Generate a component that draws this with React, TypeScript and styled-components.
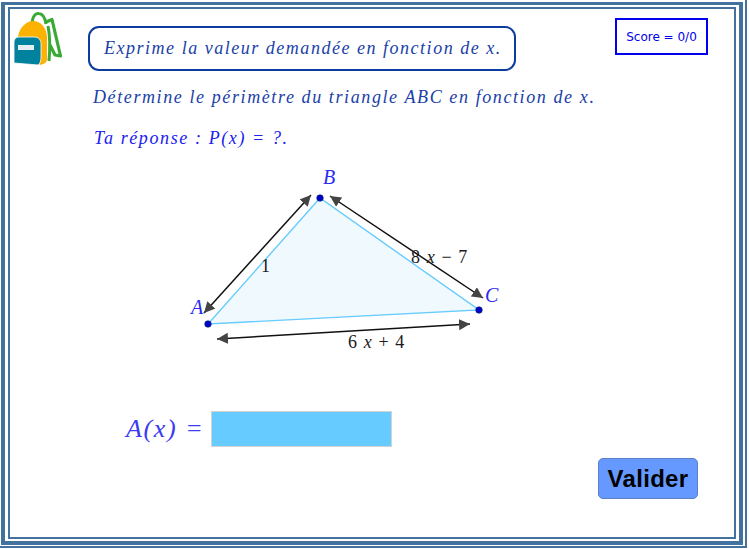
import React from 'react'
import styled, { createGlobalStyle } from 'styled-components'

const GlobalStyle = createGlobalStyle`
	html, body {
		margin: 0;
		padding: 0;
		background: #ffffff;
	}
`

const frameBlue = '#44729f'

const Page = styled.div`
	box-sizing: border-box;
	width: 747px;
	height: 548px;
	border-right: 2px solid ${frameBlue};
	border-bottom: 2px solid ${frameBlue};
	padding: 2px 2px 1px 1px;
	overflow: hidden;
`

const OuterFrame = styled.div`
	box-sizing: border-box;
	height: 100%;
	border: 4px solid ${frameBlue};
	border-top-width: 3px;
	padding: 2px 3px;
`

const InnerFrame = styled.div`
	box-sizing: border-box;
	height: 100%;
	border: 2px solid ${frameBlue};
`

const Board = styled.main`
	height: 100%;
	display: flex;
	flex-direction: column;
`

const Header = styled.header`
	display: flex;
	align-items: flex-start;
	height: 62px;
	padding: 1px 26px 0 2px;
`

const Bag = styled.svg`
	width: 52px;
	height: 56px;
	flex: none;
`

const TitleBox = styled.div`
	box-sizing: border-box;
	width: 428px;
	height: 45px;
	margin: 16px 0 0 24px;
	border: 2px solid #0d3c9f;
	border-radius: 11px;
	display: flex;
	align-items: center;
	padding-left: 14px;
	color: #1a3fa8;
	font: italic 18px "Liberation Serif", serif;
	letter-spacing: 1.52px;
	white-space: nowrap;
`

const ScoreBox = styled.div`
	box-sizing: border-box;
	width: 93px;
	height: 37px;
	margin: 8px 0 0 auto;
	border: 2px solid #0000ee;
	display: flex;
	align-items: center;
	justify-content: center;
	color: #0000ee;
	font: 12px "DejaVu Sans", sans-serif;
`

const Statement = styled.p<{ $color: string; $top: number; $left: number }>`
	margin: ${({ $top }) => $top}px 0 0 ${({ $left }) => $left}px;
	color: ${({ $color }) => $color};
	font: italic 18px/20px "Liberation Serif", serif;
	letter-spacing: 1.6px;
	white-space: nowrap;
`

const Figure = styled.svg`
	display: block;
	flex: none;
	width: 330px;
	height: 200px;
	margin: 12px 0 0 170px;
`

const AnswerRow = styled.div`
	display: flex;
	align-items: center;
	height: 36px;
	margin: 51px 0 0 116px;
`

const AnswerLabel = styled.span`
	width: 85px;
	color: #3b3bf0;
	font: italic 26px/36px "Liberation Serif", serif;
	letter-spacing: 1.6px;
	white-space: nowrap;
`

const AnswerInput = styled.div`
	box-sizing: border-box;
	width: 181px;
	height: 36px;
	background: #66ccff;
	border: 1px solid #d3d3d3;
`

const Footer = styled.div`
	display: flex;
	justify-content: flex-end;
	padding: 11px 36px 0 0;
`

const ValidButton = styled.button`
	box-sizing: border-box;
	width: 100px;
	height: 41px;
	border: 1px solid #5b80c8;
	border-radius: 5px;
	background: #6699ff;
	color: #000000;
	font: bold 24px "Liberation Sans", sans-serif;
	letter-spacing: 0.3px;
	padding: 0;
`

const SideLabel = styled.text`
	font: 18px "Liberation Serif", serif;
	letter-spacing: 1.1px;
	fill: #1a1a1a;
`

const MathVar = styled.tspan`
	font-style: italic;
`

const PointLabel = styled.text`
	font: italic 20px "Liberation Serif", serif;
	fill: #2a2af0;
`

const Arrow = ({ x1, y1, x2, y2 }: { x1: number; y1: number; x2: number; y2: number }) => (
	<line x1={x1} y1={y1} x2={x2} y2={y2} stroke="#111" strokeWidth="1.5" markerStart="url(#head)" markerEnd="url(#head)" />
)

const Point = ({ x, y }: { x: number; y: number }) => (
	<circle cx={x} cy={y} r="3.3" fill="#0000c8" stroke="#003366" strokeWidth="0.6" />
)

const App = () => (
	<>
		<GlobalStyle />
		<Page>
			<OuterFrame>
				<InnerFrame>
					<Board>
						<Header>
							<Bag viewBox="12 10 52 56">
								<path d="M32 22 C33 15 36 13 39 13.5 C43 14 45 17 46 24" fill="none" stroke="#3aa935" strokeWidth="3" />
								<path d="M46 22 L52 19.5 L60.5 56 L55 55 L50 45" fill="none" stroke="#3aa935" strokeWidth="3.2" strokeLinejoin="round" />
								<path d="M48 26 C50 36 50 50 49 61" fill="none" stroke="#3aa935" strokeWidth="3" />
								<path d="M18 37 C19 28 26 21 33 21 C41 21 47 28 47 38 L47 59 C47 62 45 64 40 65 Z" fill="#fdb100" />
								<path d="M14 42 C14 39 16 37 19 37 L34 37 C39 37 41 40 41 44 L41 57 C41 61 40 64 38 65 L14 63 Z" fill="#00829f" stroke="#ffffff" strokeWidth="0.8" />
								<rect x="18" y="45" width="16" height="5" fill="#e6eef2" />
							</Bag>
							<TitleBox>Exprime la valeur demandée en fonction de x.</TitleBox>
							<ScoreBox>Score = 0/0</ScoreBox>
						</Header>
						<Statement $color="#1a3fa8" $top={15} $left={83}>Détermine le périmètre du triangle ABC en fonction de x.</Statement>
						<Statement $color="#2020f0" $top={21} $left={84}>Ta réponse : P(x) = ?.</Statement>
						<Figure viewBox="180 160 330 200">
							<defs>
								<marker id="head" markerWidth="12" markerHeight="12" refX="11" refY="5.5" orient="auto-start-reverse" markerUnits="userSpaceOnUse">
									<path d="M0 0 L11 5.5 L0 11 Z" fill="#444" />
								</marker>
							</defs>
							<polygon points="208,324 320,198 479,310" fill="#f0f9fe" stroke="#66ccff" strokeWidth="1.4" />
							<Arrow x1={204} y1={313} x2={311} y2={195} />
							<Arrow x1={330} y1={196} x2={483} y2={298} />
							<Arrow x1={217} y1={339} x2={470} y2={324} />
							<Point x={208} y={324} />
							<Point x={320} y={198} />
							<Point x={479} y={310} />
							<PointLabel x="191" y="314">A</PointLabel>
							<PointLabel x="323" y="184">B</PointLabel>
							<PointLabel x="485" y="302">C</PointLabel>
							<SideLabel x="261" y="272">1</SideLabel>
							<SideLabel x="411" y="263">8 <MathVar>x</MathVar> − 7</SideLabel>
							<SideLabel x="348" y="348">6 <MathVar>x</MathVar> + 4</SideLabel>
						</Figure>
						<AnswerRow>
							<AnswerLabel>A(x) =</AnswerLabel>
							<AnswerInput />
						</AnswerRow>
						<Footer>
							<ValidButton>Valider</ValidButton>
						</Footer>
					</Board>
				</InnerFrame>
			</OuterFrame>
		</Page>
	</>
)

export default App
